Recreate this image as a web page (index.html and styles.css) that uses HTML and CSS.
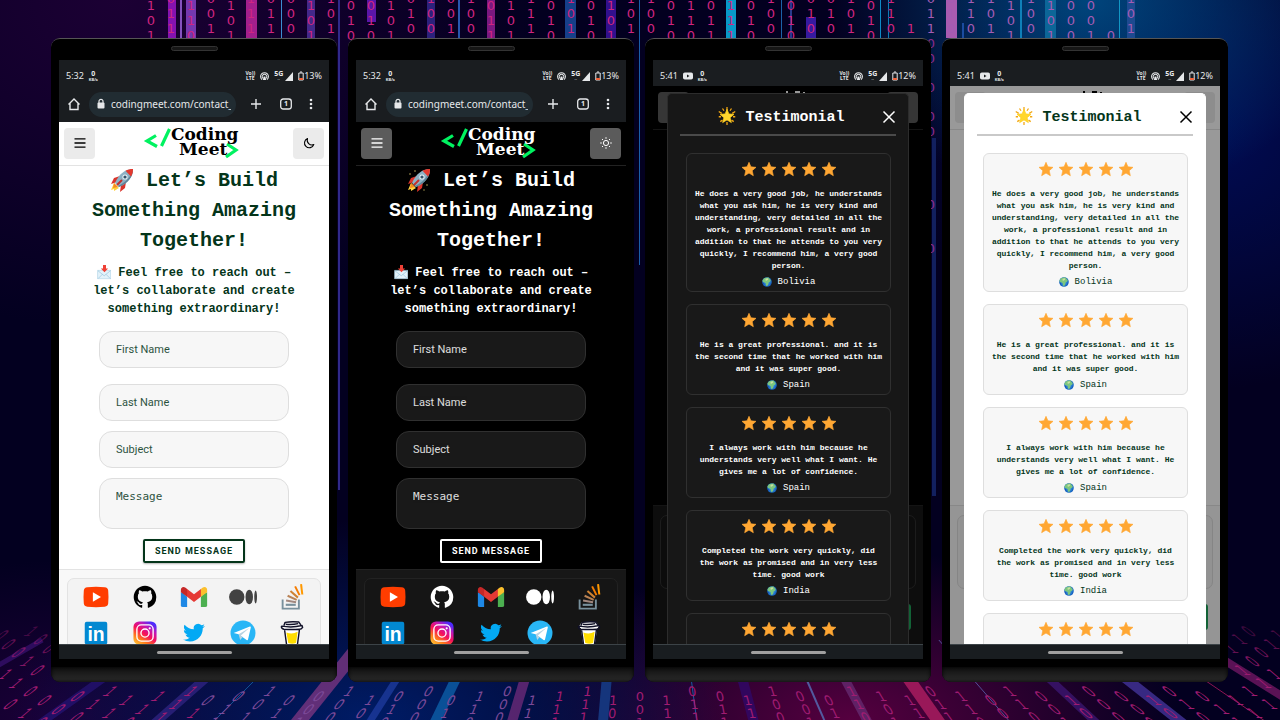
FILE: index.html
```html
<!DOCTYPE html>
<html lang="en">
<head>
<meta charset="utf-8">
<title>Coding Meet</title>
<link rel="stylesheet" href="styles.css">
</head>
<body>
<svg class="defs" aria-hidden="true">
  <defs>
    <linearGradient id="insta" x1="0" y1="1" x2="0.7" y2="0">
      <stop offset="0" stop-color="#ffd53d"/><stop offset=".3" stop-color="#ff7a1a"/><stop offset=".55" stop-color="#f50f5c"/><stop offset=".78" stop-color="#c317b5"/><stop offset="1" stop-color="#4a2bff"/>
    </linearGradient>
    <radialGradient id="sea"><stop offset="0" stop-color="#3f9df0"/><stop offset="1" stop-color="#1565c0"/></radialGradient>
  </defs>
  <symbol id="hotspot" viewBox="0 0 16 16"><g fill="none" stroke="currentColor" stroke-width="1.800"><path d="M3.500 13.500A7 7 0 1 1 12.500 13.500M5.200 11.500a4.200 4.200 0 1 1 5.600 0"/></g><path d="M6.500 8h3l1.500 6H5z" fill="currentColor"/></symbol>
  <symbol id="signal" viewBox="0 0 8 9"><path d="M8 0v9H0z" fill="currentColor"/></symbol>
  <symbol id="battery" viewBox="0 0 6 10"><path d="M2 1h2M.8 2h4.400v7H.8z" fill="none" stroke="currentColor"/><path d="M1 7h4v2H1z" fill="#f0643c"/></symbol>
  <symbol id="yt-note" viewBox="0 0 10 8"><rect y=".5" width="10" height="7" rx="1.800" fill="currentColor"/><path d="M4 2.500v3L6.500 4z" fill="#1a1d20"/></symbol>
  <symbol id="home" viewBox="0 0 14 14"><path d="M1.500 7.500 7 2l5.500 5.500M3 6.500v6h8v-6" fill="none" stroke="currentColor" stroke-width="1.400"/></symbol>
  <symbol id="lock" viewBox="0 0 10 12"><rect x="1.500" y="4.500" width="7" height="6" rx="1" fill="currentColor"/><path d="M3 5V3.300a2 2 0 0 1 4 0V5" fill="none" stroke="currentColor" stroke-width="1.200"/></symbol>
  <symbol id="plus" viewBox="0 0 14 14"><path d="M7 2v10M2 7h10" stroke="currentColor" stroke-width="1.400"/></symbol>
  <symbol id="tabs" viewBox="0 0 14 14"><rect x="1.700" y="2" width="10.600" height="10" rx="2.500" fill="none" stroke="currentColor" stroke-width="1.300"/></symbol>
  <symbol id="dots" viewBox="0 0 12 14"><g fill="currentColor"><circle cx="6" cy="3" r="1.300"/><circle cx="6" cy="7" r="1.300"/><circle cx="6" cy="11" r="1.300"/></g></symbol>
  <symbol id="menu" viewBox="0 0 14 14"><path d="M1.500 2.800h11M1.500 7h11M1.500 11.200h11" stroke="currentColor" stroke-width="1.300"/></symbol>
  <symbol id="moon" viewBox="0 0 14 14"><path d="M5.500 2.500A4.800 4.800 0 1 0 11.800 8.600 4.800 4.800 0 0 1 5.500 2.500z" fill="none" stroke="currentColor" stroke-width="1.100" stroke-linejoin="round"/></symbol>
  <symbol id="sun" viewBox="0 0 14 14"><g fill="none" stroke="currentColor"><circle cx="7" cy="7" r="2.600"/><path d="M7 1.200v1.600M7 11.200v1.600M1.200 7h1.600M11.200 7h1.600M3 3l1 1M10 10l1 1M3 11l1-1M10 4l1-1"/></g></symbol>
  <symbol id="close" viewBox="0 0 14 14"><path d="M1.500 1.500l11 11M12.500 1.500l-11 11" stroke="currentColor" stroke-width="1.500"/></symbol>
  <symbol id="star" viewBox="0 0 24 24"><path d="M12 2l2.900 6.800 7.600.7-5.700 5 1.700 7.500L12 18.100l-6.500 3.900 1.700-7.500-5.700-5 7.600-.7z" fill="#ffa733" stroke="#ffa733" stroke-linejoin="round"/></symbol>
  <symbol id="rocket" viewBox="0 0 24 24">
    <path d="M4 15l-3 7 3-1 0 2 5-3z" fill="#ffd23f"/><path d="M4 15l-1 5 5-1z" fill="#f58a1f"/>
    <path d="M10 8 4 10l-3 6 6-2zM16 14l-1 6-5 4 1-7z" fill="#d9342b"/>
    <path d="M23 1C15 1 9 6 5 15l4 4c9-4 14-10 14-18z" fill="#8db1c4"/><path d="M8 18l1 1C18 15 23 9 23 1c-2 8-7 13-15 17z" fill="#5f8599"/>
    <path d="M23 1c-3 0-5.500.5-7.500 1.700L21 8.500C22.500 6 23 4 23 1z" fill="#e3392e"/><circle cx="15" cy="9" r="2.600" fill="#e6f1f5"/><circle cx="15" cy="9" r="1.600" fill="#33536b"/><path d="M7 17l5-5" stroke="#c5302c" stroke-width="2"/>
  </symbol>
  <symbol id="sparks" viewBox="0 0 24 24"><g fill="#b9a85b"><circle cx="3" cy="6" r=".8"/><circle cx="8" cy="3" r=".8"/><circle cx="20" cy="17" r=".8"/><circle cx="17" cy="22" r=".7"/></g><use href="#rocket"/></symbol>
  <symbol id="mail" viewBox="0 0 24 24"><path d="M1 9h22v14H1z" fill="#e3f2fa" stroke="#a8cfe2"/><path d="M1.500 9.500 12 18l10.500-8.500M2 22.500l7-7M22 22.500l-7-7" fill="none" stroke="#8dbfd9"/><path d="M10 0h5v6h3.500L12.500 12 6.500 6H10z" fill="#ef4136"/></symbol>
  <symbol id="globe" viewBox="0 0 24 24"><circle cx="12" cy="12" r="11.500" fill="url(#sea)"/><path d="M5 3c4-2.500 9-2.500 12-1l1 3 3 2-1 4-4 2-1 5-3 4-3-2 0-5-3-2-4-1-1-4z" fill="#7cc67f"/><path d="M9 4l5-1 1 3-4 3-3-1z" fill="#c9dfa0"/><path d="M1.500 13l3 2 1 5a11 11 0 0 1-4-7zM20 15l2 1-3 4z" fill="#1a4fb5"/></symbol>
  <symbol id="glow" viewBox="0 0 24 24"><path d="M12 0v5M12 20v4M1 6l4 2.500M23 6l-4 2.500M3 19.500l3-2M21 19.500l-3-2M6 2l2 3M18 2l-2 3M1 13h3M23 13h-3" stroke="#f3a712" stroke-width="1.700"/><path d="M12 3l2.500 6.300 6.800.5-5.200 4.400 1.700 6.600L12 17.200l-5.800 3.600 1.700-6.600-5.200-4.400 6.800-.5z" fill="#ffd62e" stroke="#ffcf1f"/></symbol>
  <symbol id="youtube" viewBox="0 0 48 48"><path d="M10 8.500q14-1.500 28 0 5 .5 5.500 5 1 10.500 0 21-.5 4.500-5.500 5-14 1.500-28 0-5-.5-5.500-5-1-10.500 0-21 .5-4.500 5.500-5z" fill="#ff3d00"/><path d="M19 16.500v15L32 24z" fill="#fff"/></symbol>
  <symbol id="github" viewBox="-.5 -.5 17 17"><path transform="translate(1.600 1.600) scale(.8)" d="M8 0C3.580 0 0 3.580 0 8c0 3.540 2.290 6.530 5.470 7.590.4.070.55-.17.55-.38 0-.19-.01-.82-.01-1.490-2.010.37-2.530-.49-2.690-.94-.09-.23-.48-.94-.82-1.130-.28-.15-.68-.52-.01-.53.63-.01 1.080.58 1.230.82.72 1.210 1.870.87 2.330.66.070-.52.28-.87.51-1.070-1.780-.2-3.640-.89-3.640-3.950 0-.87.31-1.590.82-2.150-.08-.2-.36-1.020.08-2.120 0 0 .67-.21 2.200.82.64-.18 1.320-.27 2-.27s1.360.09 2 .27c1.530-1.040 2.200-.82 2.200-.82.44 1.100.16 1.920.08 2.120.51.56.82 1.270.82 2.150 0 3.070-1.870 3.750-3.650 3.950.29.25.54.73.54 1.480 0 1.070-.01 1.930-.01 2.200 0 .21.15.46.55.38A8.010 8.010 0 0 0 16 8c0-4.420-3.580-8-8-8Z" fill="currentColor"/></symbol>
  <symbol id="gmail" viewBox="0 0 48 48"><path d="M45 16.200l-5 2.750-5 4.750V40h7a3 3 0 0 0 3-3z" fill="#4caf50"/><path d="M3 16.200l3.614 1.710L13 23.700V40H6a3 3 0 0 1-3-3z" fill="#1e88e5"/><path d="M35 11.200 24 19.450 13 11.200 12 17l1 6.700 11 8.250 11-8.250L36 17z" fill="#e53935"/><path d="M3 12.298V16.200l10 7.500V11.200L9.876 8.859A4.300 4.300 0 0 0 3 12.298z" fill="#c62828"/><path d="M45 12.298V16.200l-10 7.500V11.200l3.124-2.341A4.300 4.300 0 0 1 45 12.298z" fill="#fbc02d"/></symbol>
  <symbol id="medium" viewBox="0 0 48 48"><g fill="currentColor"><circle cx="14" cy="24" r="12.300"/><ellipse cx="34" cy="24" rx="6" ry="11.600"/><ellipse cx="44.200" cy="24" rx="2.200" ry="10.400"/></g></symbol>
  <symbol id="stack" viewBox="0 0 48 48"><path d="M9 28v14.500h26V28" fill="none" stroke="#78909c" stroke-width="3"/><path d="M14 36.500h16" stroke="#78909c" stroke-width="3.400"/><g stroke-width="3.200"><path d="M14.500 29.500l16 2.800" stroke="#a1887f"/><path d="M17 22l14.500 6.500" stroke="#b98255"/><path d="M21.500 14.500l12 10.500" stroke="#cf8232"/><path d="M29 7l7 14" stroke="#f57c00"/><path d="M38.500 3.500l2 16.500" stroke="#ff9800"/></g></symbol>
  <symbol id="linkedin" viewBox="0 0 48 48"><rect x="6" y="6" width="36" height="36" rx="3" fill="#0288d1"/></symbol>
  <symbol id="instagram" viewBox="0 0 48 48"><rect x="5.500" y="5.500" width="37" height="37" rx="9" fill="url(#insta)"/><rect x="11" y="11" width="26" height="26" rx="7" fill="none" stroke="#fff" stroke-width="2.200"/><circle cx="24" cy="24" r="6.500" fill="none" stroke="#fff" stroke-width="2.200"/><circle cx="31.500" cy="16.500" r="1.700" fill="#fff"/></symbol>
  <symbol id="twitter" viewBox="0 0 48 48"><path transform="translate(6.500 6) scale(1.460)" d="M23.953 4.570a10 10 0 01-2.825.775 4.958 4.958 0 002.163-2.723c-.951.555-2.005.959-3.127 1.184a4.920 4.920 0 00-8.384 4.482C7.690 8.095 4.067 6.130 1.640 3.162a4.822 4.822 0 00-.666 2.475c0 1.710.87 3.213 2.188 4.096a4.904 4.904 0 01-2.228-.616v.06a4.923 4.923 0 003.946 4.827 4.996 4.996 0 01-2.212.085 4.936 4.936 0 004.604 3.417 9.867 9.867 0 01-6.102 2.105c-.39 0-.779-.023-1.170-.067a13.995 13.995 0 007.557 2.209c9.053 0 13.998-7.496 13.998-13.985 0-.21 0-.42-.015-.63A9.935 9.935 0 0024 4.590z" fill="#03a9f4"/></symbol>
  <symbol id="telegram" viewBox="0 0 48 48"><circle cx="24" cy="24" r="20" fill="#29b6f6"/><path d="M9 24 35 13.500q1.700-.4 1.500 1.500L32 34.500q-.6 1.600-2.200.7L17 26z" fill="#fff"/><path d="M17 26l2.500 9 4-4.500-3-2.500L34 16z" fill="#b8d3e2"/></symbol>
  <symbol id="coffee" viewBox="0 0 48 48"><path d="M8 13l4-6q12-2 24 0l4 6-3 4-4 27H15l-4-27z" fill="#fff"/><path d="M15 23q9 4 18-1l-2.500 18q-6 2-12.500 0z" fill="#ffdd00"/><g fill="none" stroke="#101028" stroke-width="2.300" stroke-linejoin="round"><path d="M12 18l3.500 26h17L36 18M8 13q16 3 32-1l1 3q-2 3-5 3-12 1-25 0-4-1-4-4zM11 12l2-5q11-2 22-.5l3 4.500M14 10q10 1 20-1"/></g></symbol>
</svg>

<svg class="backdrop" id="backdrop" viewBox="0 0 1280 720" preserveAspectRatio="xMidYMid slice" aria-hidden="true"></svg>

<main class="phones">

  <section class="phone light">
    <div class="phone-top"><span class="earpiece"></span></div>
    <div class="screen">
      <div class="status"><span>5:32</span><span class="pair"><b>0</b><i>KB/s</i></span><span class="grow"></span><span class="pair lte"><i>Vo))</i><i>LTE</i></span><svg class="s-md"><use href="#hotspot"/></svg><span class="pair"><b>5G</b><i>··</i></span><svg class="s-sm"><use href="#signal"/></svg><span class="charge"><svg class="s-bat"><use href="#battery"/></svg>13%</span></div>
      <div class="toolbar">
        <button aria-label="Home"><svg><use href="#home"/></svg></button>
        <label class="address"><svg><use href="#lock"/></svg><input type="text" aria-label="Address" value="codingmeet.com/contact_us"></label>
        <button aria-label="New tab"><svg><use href="#plus"/></svg></button>
        <button class="tabs" aria-label="Tabs"><svg><use href="#tabs"/></svg><span>1</span></button>
        <button aria-label="More"><svg><use href="#dots"/></svg></button>
      </div>
      <div class="page">
        <header class="site-head"><button class="square" aria-label="Menu"><svg><use href="#menu"/></svg></button><svg class="logo" viewBox="0 0 100 34"><path d="M12 9.500 3 15l10 5.500M25.500 3l-8 17M83 18l9 6-10 7" fill="none" stroke="#00f260" stroke-width="3.200"/><text x="27" y="14">Coding</text><text x="35" y="29">Meet</text></svg><button class="square" aria-label="Dark mode"><svg><use href="#moon"/></svg></button></header>
        <h1><svg class="em"><use href="#rocket"/></svg> Let’s Build Something Amazing Together!</h1>
        <p class="lead"><svg class="em"><use href="#mail"/></svg> Feel free to reach out – let’s collaborate and create something extraordinary!</p>
        <form class="contact">
          <input class="first" type="text" aria-label="First Name" placeholder="First Name">
          <input type="text" aria-label="Last Name" placeholder="Last Name">
          <input type="text" aria-label="Subject" placeholder="Subject">
          <textarea aria-label="Message" placeholder="Message"></textarea>
          <button type="button">SEND MESSAGE</button>
        </form>
        <footer class="site-foot"><div class="social">
          <a href="#" aria-label="YouTube"><svg><use href="#youtube"/></svg></a><a href="#" aria-label="GitHub"><svg><use href="#github"/></svg></a><a href="#" aria-label="Gmail"><svg><use href="#gmail"/></svg></a><a href="#" aria-label="Medium" class="medium"><svg><use href="#medium"/></svg></a><a href="#" aria-label="Stack Overflow"><svg><use href="#stack"/></svg></a>
          <a href="#" aria-label="LinkedIn"><svg viewBox="0 0 48 48"><use href="#linkedin"/><text x="24" y="36" text-anchor="middle" class="in-mark">in</text></svg></a><a href="#" aria-label="Instagram"><svg><use href="#instagram"/></svg></a><a href="#" aria-label="Twitter"><svg><use href="#twitter"/></svg></a><a href="#" aria-label="Telegram"><svg><use href="#telegram"/></svg></a><a href="#" aria-label="Buy me a coffee"><svg><use href="#coffee"/></svg></a>
        </div></footer>
      </div>
      <div class="gesture"><span></span></div>
    </div>
    <div class="chin"></div>
  </section>

  <section class="phone dark">
    <div class="phone-top"><span class="earpiece"></span></div>
    <div class="screen">
      <div class="status"><span>5:32</span><span class="pair"><b>0</b><i>KB/s</i></span><span class="grow"></span><span class="pair lte"><i>Vo))</i><i>LTE</i></span><svg class="s-md"><use href="#hotspot"/></svg><span class="pair"><b>5G</b><i>··</i></span><svg class="s-sm"><use href="#signal"/></svg><span class="charge"><svg class="s-bat"><use href="#battery"/></svg>13%</span></div>
      <div class="toolbar">
        <button aria-label="Home"><svg><use href="#home"/></svg></button>
        <label class="address"><svg><use href="#lock"/></svg><input type="text" aria-label="Address" value="codingmeet.com/contact_us"></label>
        <button aria-label="New tab"><svg><use href="#plus"/></svg></button>
        <button class="tabs" aria-label="Tabs"><svg><use href="#tabs"/></svg><span>1</span></button>
        <button aria-label="More"><svg><use href="#dots"/></svg></button>
      </div>
      <div class="page">
        <header class="site-head"><button class="square" aria-label="Menu"><svg><use href="#menu"/></svg></button><svg class="logo" viewBox="0 0 100 34"><path d="M12 9.500 3 15l10 5.500M25.500 3l-8 17M83 18l9 6-10 7" fill="none" stroke="#00f260" stroke-width="3.200"/><text x="27" y="14">Coding</text><text x="35" y="29">Meet</text></svg><button class="square" aria-label="Light mode"><svg><use href="#sun"/></svg></button></header>
        <h1><svg class="em"><use href="#sparks"/></svg> Let’s Build Something Amazing Together!</h1>
        <p class="lead"><svg class="em"><use href="#mail"/></svg> Feel free to reach out – let’s collaborate and create something extraordinary!</p>
        <form class="contact">
          <input class="first" type="text" aria-label="First Name" placeholder="First Name">
          <input type="text" aria-label="Last Name" placeholder="Last Name">
          <input type="text" aria-label="Subject" placeholder="Subject">
          <textarea aria-label="Message" placeholder="Message"></textarea>
          <button type="button">SEND MESSAGE</button>
        </form>
        <footer class="site-foot"><div class="social">
          <a href="#" aria-label="YouTube"><svg><use href="#youtube"/></svg></a><a href="#" aria-label="GitHub"><svg><use href="#github"/></svg></a><a href="#" aria-label="Gmail"><svg><use href="#gmail"/></svg></a><a href="#" aria-label="Medium" class="medium"><svg><use href="#medium"/></svg></a><a href="#" aria-label="Stack Overflow"><svg><use href="#stack"/></svg></a>
          <a href="#" aria-label="LinkedIn"><svg viewBox="0 0 48 48"><use href="#linkedin"/><text x="24" y="36" text-anchor="middle" class="in-mark">in</text></svg></a><a href="#" aria-label="Instagram"><svg><use href="#instagram"/></svg></a><a href="#" aria-label="Twitter"><svg><use href="#twitter"/></svg></a><a href="#" aria-label="Telegram"><svg><use href="#telegram"/></svg></a><a href="#" aria-label="Buy me a coffee"><svg><use href="#coffee"/></svg></a>
        </div></footer>
      </div>
      <div class="gesture"><span></span></div>
    </div>
    <div class="chin"></div>
  </section>

  <section class="phone dark">
    <div class="phone-top"><span class="earpiece"></span></div>
    <div class="screen">
      <div class="status"><span>5:41</span><svg class="s-lg"><use href="#yt-note"/></svg><span class="pair"><b>0</b><i>KB/s</i></span><span class="grow"></span><span class="pair lte"><i>Vo))</i><i>LTE</i></span><svg class="s-md"><use href="#hotspot"/></svg><span class="pair"><b>5G</b><i>··</i></span><svg class="s-sm"><use href="#signal"/></svg><span class="charge"><svg class="s-bat"><use href="#battery"/></svg>12%</span></div>
      <div class="page">
        <header class="site-head"><span class="square"></span><svg class="logo" viewBox="0 0 100 34"><path d="M49 3v-2M58 3v-1h4M66 3v-1" fill="none" stroke="currentColor" stroke-width="2"/></svg><span class="square"></span></header>
        <div class="rest"></div>
        <footer class="site-foot behind"><div class="panel"></div><div class="call"></div></footer>
        <div class="shade"></div>
        <div class="modal" data-reviews></div>
      </div>
      <div class="gesture"><span></span></div>
    </div>
    <div class="chin"></div>
  </section>

  <section class="phone light">
    <div class="phone-top"><span class="earpiece"></span></div>
    <div class="screen">
      <div class="status"><span>5:41</span><svg class="s-lg"><use href="#yt-note"/></svg><span class="pair"><b>0</b><i>KB/s</i></span><span class="grow"></span><span class="pair lte"><i>Vo))</i><i>LTE</i></span><svg class="s-md"><use href="#hotspot"/></svg><span class="pair"><b>5G</b><i>··</i></span><svg class="s-sm"><use href="#signal"/></svg><span class="charge"><svg class="s-bat"><use href="#battery"/></svg>12%</span></div>
      <div class="page">
        <header class="site-head"><span class="square"></span><svg class="logo" viewBox="0 0 100 34"><path d="M49 3v-2M58 3v-1h4M66 3v-1" fill="none" stroke="currentColor" stroke-width="2"/></svg><span class="square"></span></header>
        <div class="rest"></div>
        <footer class="site-foot behind"><div class="panel"></div><div class="call"></div></footer>
        <div class="shade"></div>
        <div class="modal" data-reviews></div>
      </div>
      <div class="gesture"><span></span></div>
    </div>
    <div class="chin"></div>
  </section>
</main>
<script src="app.js"></script>
</body>
</html>
```
FILE: styles.css
```css
* { box-sizing: border-box; }
body {
  margin: 0;
  height: 100vh;
  overflow: hidden;
  display: flex;
  font-family: "Noto Sans", sans-serif;
  background:
    radial-gradient(ellipse 260px 200px at 1090px 0, #00457c, transparent),
    radial-gradient(ellipse 300px 260px at 1200px 130px, #000c55, transparent),
    radial-gradient(ellipse 360px 200px at 370px 720px, #001c66, transparent),
    radial-gradient(ellipse 330px 170px at 850px 720px, #55003f, transparent),
    radial-gradient(ellipse 420px 330px at 120px 0, #1c0034, transparent),
    radial-gradient(ellipse 250px 160px at 60px 720px, #1c0038, transparent),
    #030020;
}
svg { display: block; }
button, input, textarea { font: inherit; color: inherit; border: 0; padding: 0; margin: 0; background: none; outline: 0; }
.defs { position: absolute; width: 0; height: 0; }
.backdrop { position: absolute; inset: 0; width: 100%; height: 100%; }
.backdrop text { font-family: "DejaVu Sans", sans-serif; font-size: 13px; text-anchor: middle; }

.phones { position: relative; flex: 1; display: grid; grid-template-columns: repeat(4, minmax(0, 1fr)); gap: 11px; padding: 38px 52px 38px 51px; }
.phone { display: flex; flex-direction: column; min-height: 0; background: #000; border-radius: 9px; border-top: 1px solid #555; overflow: hidden; }
.phone-top { height: 21px; padding-bottom: 3px; display: flex; align-items: center; justify-content: center; flex: none; }
.earpiece { width: 47px; height: 5px; border-radius: 3px; border: 1px solid #333; background: #161616; }
.chin { height: 15px; margin-top: 8px; flex: none; background: linear-gradient(#111, #2b2b2b); box-shadow: inset 0 0 4px #000; }
.screen { flex: 1; min-height: 0; margin: 0 8px; display: flex; flex-direction: column; color: #e6e8ea; background: #1a1d20; }
.status { height: 26px; flex: none; display: flex; align-items: center; gap: 5px; padding: 6px 7px 0 7px; font-size: 9px; line-height: 12px; }
.grow { flex: 1; }
.pair { display: flex; flex-direction: column; align-items: center; }
.pair b { font-size: 7px; line-height: 6px; }
.pair i { font-style: normal; font-weight: 700; font-size: 4px; line-height: 5px; }
.lte i { font-size: 5px; line-height: 5px; }
.s-lg { width: 10px; height: 8px; }
.s-md { width: 9px; height: 9px; }
.s-sm { width: 8px; height: 9px; }
.s-bat { width: 6px; height: 10px; }
.pair + .s-sm { margin-left: -3px; }
.charge { display: flex; align-items: center; }
.toolbar { height: 36px; flex: none; display: flex; align-items: center; padding: 0 11px 0 8px; }
.toolbar button svg { width: 14px; height: 14px; }
.toolbar button + button { margin-left: 16px; }
.toolbar button:last-child { margin-left: 11px; }
.tabs { display: grid; place-items: center; }
.tabs svg, .tabs span { grid-area: 1 / 1; }
.tabs span { font-size: 7px; line-height: 8px; font-weight: 700; }
.address { flex: 1; min-width: 0; height: 25px; margin: 0 13px 0 8px; padding: 0 5px 0 7px; border-radius: 13px; background: #212c32; display: flex; align-items: center; gap: 5px; }
.address svg { width: 10px; height: 12px; flex: none; }
.address input { flex: 1; min-width: 0; width: 0; font-size: 10px; line-height: 14px; }
.gesture { height: 15px; flex: none; display: flex; align-items: center; justify-content: center; border-top: 1px solid #3c4347; background: #191d20; }
.gesture span { width: 75px; height: 3px; border-radius: 2px; background: #a0a0a0; }

.light { --bg: #fff; --ink: #04351a; --icon: #000; --line: #e3e3e3; --field: #f7f7f7; --field-line: #dedede; --square: #ebebeb; --foot: #f8f8f8; --panel: #f3f3f3; --medium: #424242; --rule: #c9c9c9; --modal: #fff; --press: #04351a; }
.dark { --bg: #000; --ink: #fff; --icon: #fff; --line: #222; --field: #191919; --field-line: #303030; --square: #5b5b5b; --foot: #171717; --panel: #151515; --medium: #fff; --rule: #4a4a4a; --modal: #171717; --press: #fff; }
.page { position: relative; flex: 1; min-height: 0; overflow: hidden; display: flex; flex-direction: column; background: var(--bg); color: var(--ink); }
.site-head { height: 44px; flex: none; display: flex; align-items: center; justify-content: space-between; padding: 0 5px 1px; border-bottom: 1px solid var(--line); color: var(--icon); }
.square { width: 31px; height: 31px; border-radius: 4px; background: var(--square); display: flex; align-items: center; justify-content: center; }
.square svg { width: 14px; height: 14px; }
.logo { width: 100px; height: 34px; overflow: visible; }
.logo text { font: bold 17px "DejaVu Serif", serif; fill: currentColor; }
h1 { margin: 0 20px; font: bold 20px/30px "Liberation Mono", monospace; text-align: center; flex: none; }
.em { display: inline-block; width: 1.2em; height: 1.2em; vertical-align: -.3em; }
.lead { margin: 8px 20px 0; font: bold 12px/18px "Liberation Mono", monospace; text-align: center; flex: none; }
.contact { display: flex; flex-direction: column; align-items: center; flex: none; margin-top: 13px; gap: 10px; font-family: Roboto, sans-serif; }
.contact input, .contact textarea { width: 190px; height: 37px; padding: 0 16px; border: 1px solid var(--field-line); border-radius: 13px; background: var(--field); font-size: 11px; }
.contact .first { margin-bottom: 6px; }
.contact textarea { height: 51px; padding: 11px 16px; font-family: "DejaVu Sans Mono", monospace; line-height: 13px; resize: none; }
.contact ::placeholder { color: var(--ink); opacity: .85; }
.contact button { height: 24px; padding: 0 10px; border: 2px solid var(--press); border-radius: 2px; font-size: 9px; font-weight: 700; letter-spacing: 1px; box-shadow: 0 1px 2px rgba(0, 0, 0, .3); }
.site-foot { flex: 1 0 auto; margin-top: 6px; padding: 8px; border-top: 1px solid var(--line); background: var(--foot); }
.social { display: grid; grid-template-columns: repeat(5, 1fr); gap: 6px 0; justify-items: center; padding: 3px 4px 12px; border: 1px solid var(--line); border-radius: 7px; background: var(--panel); }
.social a { color: var(--icon); }
.social .medium { color: var(--medium); }
.social svg { width: 30px; height: 30px; }
.in-mark { font: bold 31px "Liberation Sans", sans-serif; fill: #fff; }

.rest { flex: 1; }
.behind { flex: none; height: 139px; margin: 0; padding: 9px 7px; }
.panel { height: 74px; border: 1px solid var(--field-line); border-radius: 7px; background: var(--panel); }
.call { width: 24px; height: 26px; margin: 15px 5px 0 auto; border-radius: 3px; background: #1fa35a; }
.shade { position: absolute; inset: 0; background: rgba(0, 0, 0, .4); }
.modal { position: absolute; inset: 7px 14px 0 14px; overflow: hidden; display: flex; flex-direction: column; padding: 0 12px; border: 1px solid var(--modal); border-bottom: 0; border-radius: 5px 5px 0 0; background: var(--modal); }
.dark .modal { border-color: #2c2c2c; }
.modal-head { position: relative; height: 42px; flex: none; display: flex; align-items: center; justify-content: center; padding: 7px 0 0; margin-bottom: 17px; border-bottom: 2px solid var(--rule); }
.modal-head h2 { margin: 0 13px 0 0; font: bold 15px/20px "Liberation Mono", monospace; }
.modal-head button { position: absolute; right: 0; top: 16px; color: var(--icon); }
.modal-head button svg { width: 14px; height: 14px; }
.reviews { display: flex; flex-direction: column; gap: 12px; padding: 0 5px 0 6px; }
.review { flex: none; padding: 7px 6px 0; border: 1px solid var(--field-line); border-radius: 6px; background: var(--field); text-align: center; font-family: "Liberation Mono", monospace; }
.stars { display: flex; justify-content: center; gap: 4px; }
.stars svg { width: 16px; height: 16px; }
.review p { margin: 11px 0 0; font-size: 8px; line-height: 12px; font-weight: 700; }
.place { display: flex; align-items: center; justify-content: center; gap: 6px; height: 19px; font-size: 9px; line-height: 12px; }
.place svg { width: 10px; height: 10px; }
```
FILE: app.js
```js
const reviews = [
  ["He does a very good job, he understands what you ask him, he is very kind and understanding, very detailed in all the work, a professional result and in addition to that he attends to you very quickly, I recommend him, a very good person.", "Bolivia"],
  ["He is a great professional. and it is the second time that he worked with him and it was super good.", "Spain"],
  ["I always work with him because he understands very well what I want. He gives me a lot of confidence.", "Spain"],
  ["Completed the work very quickly, did the work as promised and in very less time. good work", "India"],
  ["", ""]
];
const stars = '<div class="stars">' + '<svg><use href="#star"/></svg>'.repeat(5) + '</div>';
const cards = reviews.map(([text, place]) =>
  `<article class="review">${stars}<p>${text}</p><div class="place">${place ? `<svg><use href="#globe"/></svg><span>${place}</span>` : ""}</div></article>`).join("");
document.querySelectorAll("[data-reviews]").forEach(modal => {
  modal.innerHTML = `<div class="modal-head"><h2><svg class="em"><use href="#glow"/></svg> Testimonial</h2><button aria-label="Close"><svg><use href="#close"/></svg></button></div><div class="reviews">${cards}</div>`;
});

// Upper wall: straight columns of digits, 20px apart. "a" columns start lower than "b" columns.
const wall = "a101 b011 a110 b001 a101 b111 b011 b000 a101 b101 a010 a010 a101 b010 b100 b001 b100 a011 a101 b111 a010 b101 a010 a101 b101 b100 a010 a110 a011 a111 a010 b100 a010 b010 b010 b101 a010 b110 b..1 b011 b010 b110 b101 a101 b100 a101 a000 a001 a..0 b101".split(" ");
const bands = [[168,8,0,38,"#8412b0"],[180,2,0,38,"#8552c0"],[186,10,0,38,"#7438b0"],[246,11,0,38,"#a31f8c"],[281,1,0,38,"#3b8fd0"],[307,8,0,38,"#43288a"],[338,2,0,490,"#30298a"],[367,9,0,22,"#5a16a8"],[427,8,0,38,"#2c217c"],[458,2,0,38,"#2858b0"],[487,8,0,38,"#7a1880"],[565,11,0,38,"#163f8a"],[606,10,0,38,"#32108e"],[639,1,0,265,"#1a5fa8"],[726,10,0,38,"#0898c8"],[781,1,0,38,"#1b62a8"],[790,2,0,38,"#293a8c"],[806,10,17,21,"#361aa0"],[880,1,0,38,"#0d8bc8"],[888,1,0,38,"#0d7ab8"],[932,4,138,358,"#12205f"],[946,11,0,38,"#a85bb0"],[962,2,23,15,"#1b4ca0"],[1020,2,0,38,"#0f80b8"],[1045,11,0,38,"#0c6698"],[1119,1,0,38,"#1296c4"],[1127,8,0,38,"#1d4a90"]];
let art = bands.map(([x, w, y, h, c]) => `<rect x="${x}" y="${y}" width="${w}" height="${h}" fill="${c}"/>`).join("");
wall.forEach((col, i) => {
  const x = 151 + i * 20;
  const tint = x > 930 ? "#a45cb4" : "#cf2580";
  [...col.slice(1)].forEach((d, r) => {
    if (d !== ".") art += `<text x="${x}" y="${(col[0] === "a" ? 10 : 3) + r * 15}" fill="${tint}">${d}</text>`;
  });
});
[48, 63, 92, 121, 136, 209, 253].forEach(y => { art += `<text x="931" y="${y}" fill="#8a2a8a">0</text>`; });

// Floor: digits on rays that meet behind the phones.
const vx = 640, vy = 296;
const ray = (k, y) => vx + k * 27 * (y - vy) / 404;
const rays = [[-26,"#35106a",5],[-21,"#241270",8],[-17,"#2e2380",9],[-12,"#7a3580",14],[-9.500,"#1d3a9c",7],[-7.200,"#0d5fa8",10],[-4.500,"#6c2a78",10],[-1.300,"#17408c",10],[2,"#1277c0",1],[4,"#300868",10],[-15,"#1565a8",1],[6.500,"#5570b8",2],[8,"#652a70",9],[10.500,"#b01f62",12],[13,"#5c63b0",1],[16,"#3b1670",8],[19,"#43349a",10],[22,"#b01a60",1],[24,"#701763",8],[28,"#1a2270",8]];
rays.forEach(([k, c, w]) => { art += `<path d="M${ray(k, 640)} 640L${ray(k, 730)} 730" stroke="${c}" stroke-width="${w}" opacity=".8"/>`; });
let seed = 7;
const next = () => (seed = (seed * 1103515245 + 12345) % 2147483648) / 2147483648;
for (let k = -36; k <= 36; k++) {
  const lean = Math.max(-50, Math.min(50, Math.atan(k * 27 / 404) * 57));
  for (let y = 636 + Math.abs(k % 3) * 4; y < 728; y += 13) {
    const x = ray(k, y);
    const bit = next() > .5 ? 1 : 0;
    if (x < -8 || x > 1288 || (y < 693 && x > 44 && x < 1236)) continue;
    art += `<text fill="${Math.abs(x - 370) < 170 ? "#7c4a98" : "#a01c72"}" opacity="${Math.min(1, (y - 610) / 70)}" transform="translate(${Math.round(x)} ${y}) skewX(${Math.round(lean)})">${bit}</text>`;
  }
}
document.getElementById("backdrop").innerHTML = art;
```
